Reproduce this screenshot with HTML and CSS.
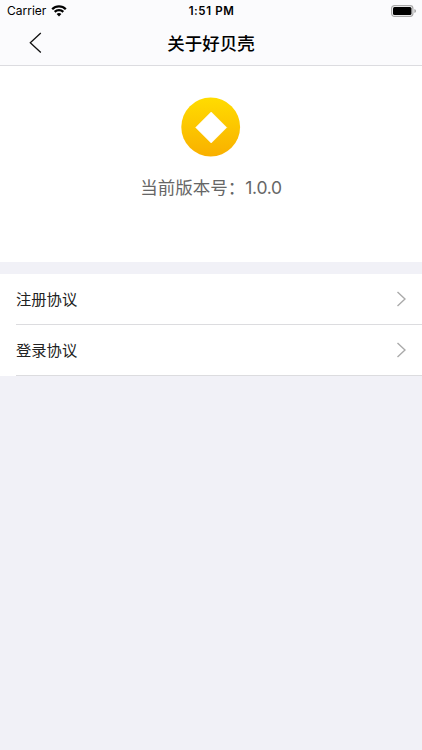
FILE: index.html
```
<!DOCTYPE html>
<html lang="zh-CN">
<head>
  <meta charset="UTF-8" />
  <meta name="viewport" content="width=device-width, initial-scale=1" />
  <title>关于好贝壳</title>
  <link rel="stylesheet" href="styles.css">
</head>
<body>
  <header class="header">
    <div class="status-bar">
      <div class="carrier">
        <span>Carrier</span>
        <svg class="wifi" width="16" height="12" viewBox="0 0 16 12">
          <path d="M1.2 4.2a9.7 9.7 0 0 1 13.6 0M3.7 6.9a6.2 6.2 0 0 1 8.6 0" fill="none" stroke="#000" stroke-width="2.3" />
          <path d="M8 11.6 5.6 9.1a3.4 3.4 0 0 1 4.8 0z" />
        </svg>
      </div>
      <span class="time">1:51 PM</span>
      <svg class="battery" width="25" height="12" viewBox="0 0 25 12">
        <rect x=".6" y=".6" width="21.3" height="10.8" rx="2.8" fill="none" stroke="#aaa" stroke-width="1.2" />
        <rect x="2" y="2" width="18.5" height="8" rx="1.5" />
        <path d="M23.5 4v4q1.3-.6 1.3-2t-1.3-2z" fill="#888" />
      </svg>
    </div>
    <nav class="nav-bar">
      <svg class="back" width="14" height="22" viewBox="0 0 14 22">
        <path d="M12.8 1 2.3 10.8l10.5 9.800" fill="none" stroke="#111" stroke-width="1.3" />
      </svg>
      <h1 class="title">关于好贝壳</h1>
    </nav>
  </header>

  <section class="about">
    <svg class="logo" width="60" height="60" viewBox="0 0 60 60">
      <defs>
        <linearGradient id="gold" x1="0" y1="0" x2="0" y2="1">
          <stop offset="0" stop-color="#ffdc00" />
          <stop offset="1" stop-color="#f9b000" />
        </linearGradient>
      </defs>
      <circle cx="29.7" cy="30" r="29.4" fill="url(#gold)" />
      <path d="M30.2 15 45.7 30.5 30.2 46 14.7 30.5z" fill="#fff" stroke="#fff" stroke-width=".6" stroke-linejoin="round" />
    </svg>
    <p class="version">当前版本号：<span class="number">1.0.0</span></p>
  </section>

  <ul class="list">
    <li class="item">
      <span>注册协议</span>
      <svg class="arrow" width="10" height="16" viewBox="0 0 10 16">
        <path d="m1.5 1 7.5 7-7.5 7" fill="none" stroke="#aaa" stroke-width="1.4" />
      </svg>
    </li>
    <li class="item">
      <span>登录协议</span>
      <svg class="arrow" width="10" height="16" viewBox="0 0 10 16">
        <path d="m1.5 1 7.5 7-7.5 7" fill="none" stroke="#aaa" stroke-width="1.4" />
      </svg>
    </li>
  </ul>
</body>
</html>
```
FILE: styles.css
```
* { box-sizing: border-box; }
body { margin: 0; min-height: 750px; background: #f1f1f7; color: #222; font-family: Inter, "Noto Sans CJK SC", sans-serif; }
svg { display: block; }

.header { height: 66px; background: #fbfbfd; border-bottom: 1px solid #dcdce0; }
.status-bar { display: grid; grid-template-columns: 1fr auto 1fr; align-items: center; height: 21px; padding: 0 6px 0 7px; color: #000; font-size: 12px; }
.carrier { display: flex; align-items: center; gap: 5px; }
.time { font-size: 11.5px; font-weight: 600; letter-spacing: 0.6px; }
.battery { justify-self: end; }
.nav-bar { display: grid; grid-template-columns: 1fr auto 1fr; align-items: center; height: 44px; }
.back { margin-left: 28px; }
.title { margin: 0; padding-top: 1px; color: #000; font-size: 17.5px; font-weight: 500; line-height: 24px; }

.about { display: flex; flex-direction: column; align-items: center; height: 196px; padding-top: 31px; background: #fff; }
.version { margin: 18px 0 0; color: #666; font-size: 17.5px; line-height: 26px; }
.number { letter-spacing: -0.3px; }

.list { margin: 12px 0 0; padding: 0 0 0 16px; background: #fff; list-style: none; }
.item { display: flex; align-items: center; justify-content: space-between; height: 51px; padding-right: 16px; border-bottom: 1px solid #dcdcdf; font-size: 15.3px; }
.item span { padding-bottom: 2px; }
```
